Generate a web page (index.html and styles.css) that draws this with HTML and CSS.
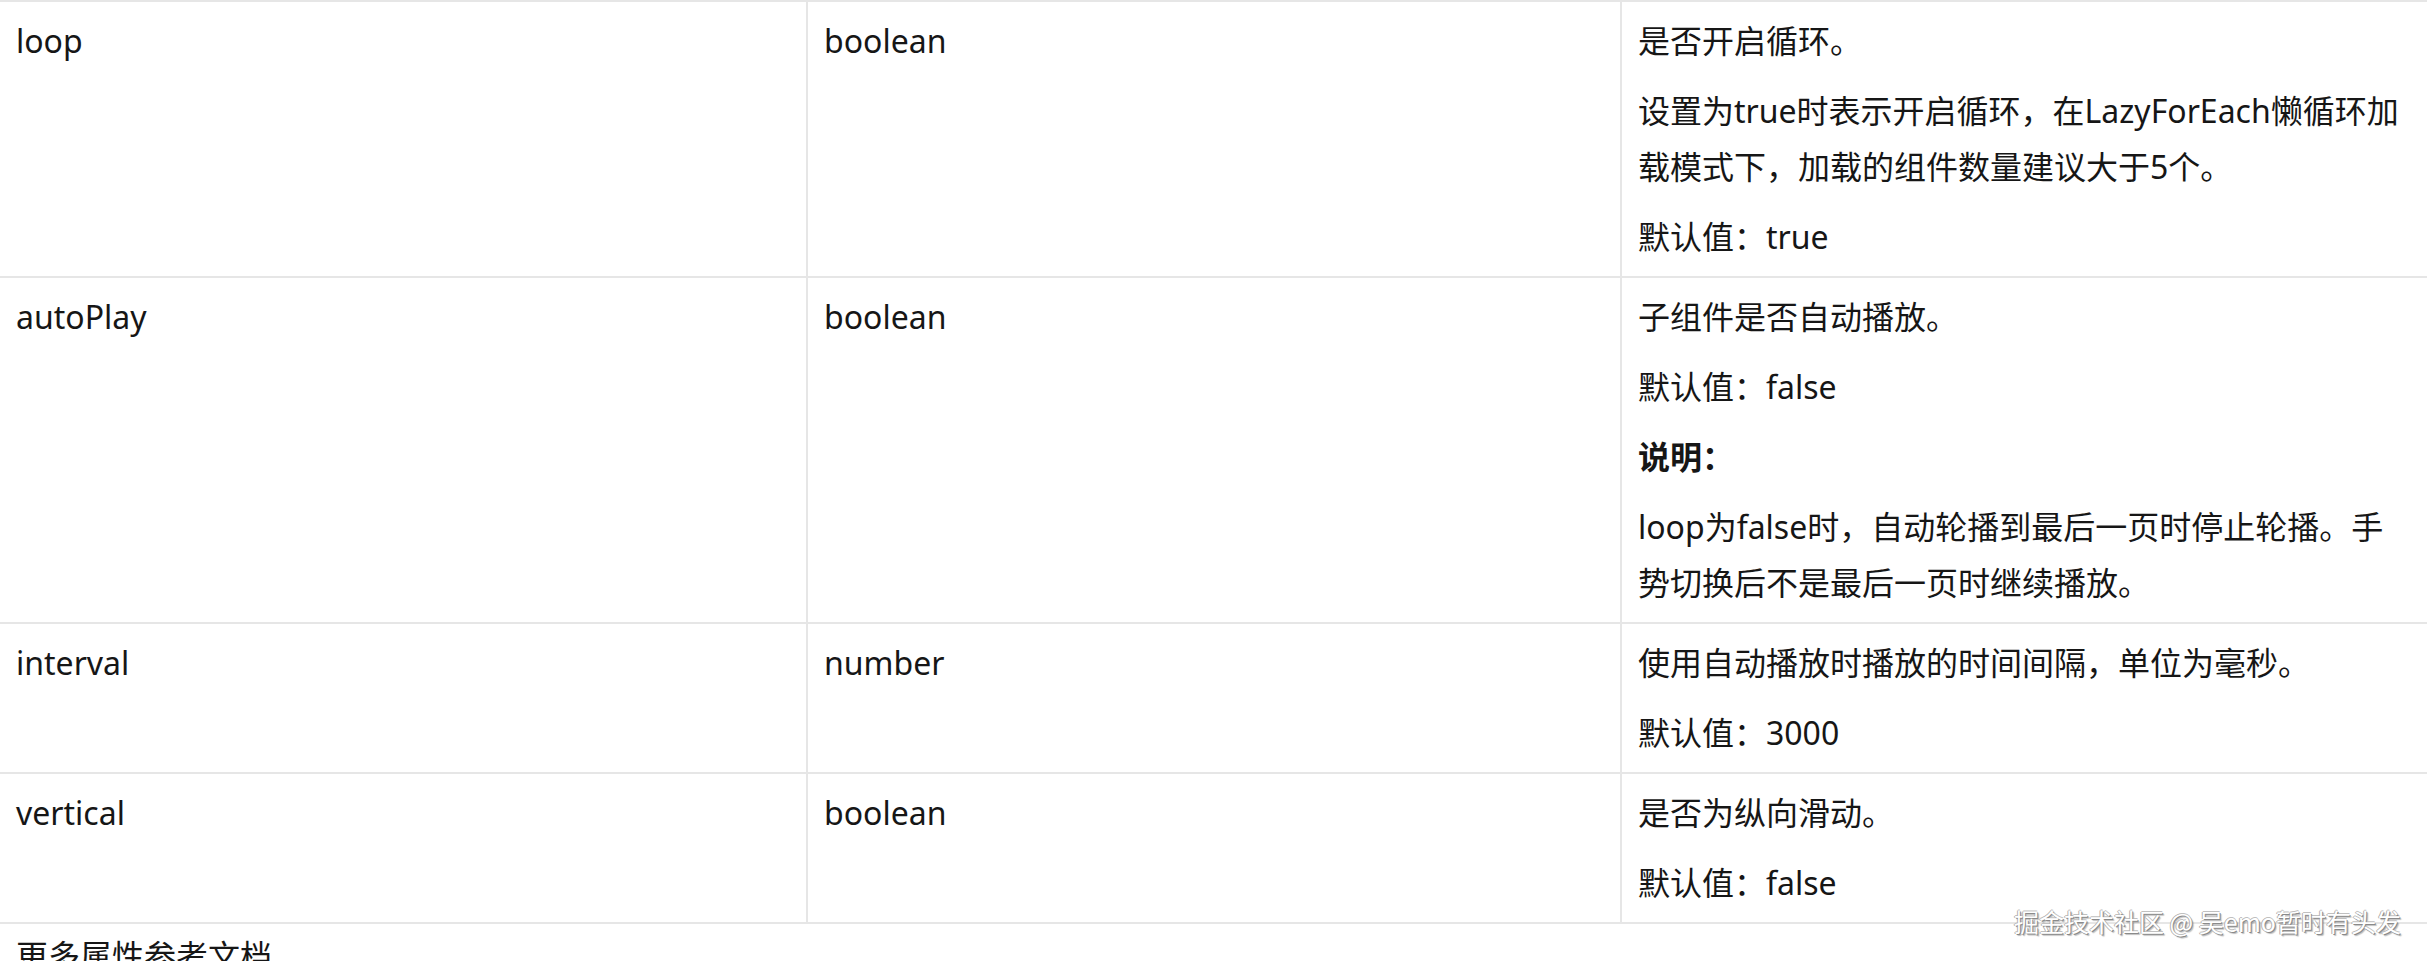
FILE: index.html
```html
<!DOCTYPE html>
<html lang="zh-CN">
<head>
<meta charset="utf-8">
<title>Swiper 属性</title>
<link rel="stylesheet" href="styles.css">
</head>
<body>
<div class="page">
  <div class="table">
    <div class="row">
      <div class="cell"><p>loop</p></div>
      <div class="cell"><p>boolean</p></div>
      <div class="cell">
        <p>是否开启循环。</p>
        <p>设置为true时表示开启循环，在LazyForEach懒循环加载模式下，加载的组件数量建议大于5个。</p>
        <p>默认值：true</p>
      </div>
    </div>
    <div class="row">
      <div class="cell"><p>autoPlay</p></div>
      <div class="cell"><p>boolean</p></div>
      <div class="cell">
        <p>子组件是否自动播放。</p>
        <p>默认值：false</p>
        <p class="strong">说明：</p>
        <p>loop为false时，自动轮播到最后一页时停止轮播。手势切换后不是最后一页时继续播放。</p>
      </div>
    </div>
    <div class="row">
      <div class="cell"><p>interval</p></div>
      <div class="cell"><p>number</p></div>
      <div class="cell">
        <p>使用自动播放时播放的时间间隔，单位为毫秒。</p>
        <p>默认值：3000</p>
      </div>
    </div>
    <div class="row">
      <div class="cell"><p>vertical</p></div>
      <div class="cell"><p>boolean</p></div>
      <div class="cell">
        <p>是否为纵向滑动。</p>
        <p>默认值：false</p>
      </div>
    </div>
  </div>
  <p class="after">更多属性参考文档</p>
  <div class="watermark">掘金技术社区 @ 吴emo暂时有头发</div>
</div>
</body>
</html>
```
FILE: styles.css
```css
html, body {
  margin: 0;
  padding: 0;
  background: #ffffff;
}
body {
  width: 2427px;
  height: 961px;
  overflow: hidden;
  font-family: "Noto Sans", "Noto Sans CJK SC", sans-serif;
  font-size: 32px;
  line-height: 56px;
  color: #161616;
}
.page {
  position: relative;
  height: 961px;
}
.table {
  display: flex;
  flex-direction: column;
}
.row {
  display: grid;
  grid-template-columns: 806px 814px 1fr;
  border-top: 2px solid #e6e6e6;
}
.row:last-child {
  border-bottom: 2px solid #e6e6e6;
}
.cell {
  padding: 11px 16px;
  display: flex;
  flex-direction: column;
  gap: 14px;
}
.cell + .cell {
  border-left: 2px solid #e6e6e6;
}
.cell p {
  margin: 0;
}
.strong {
  font-weight: 700;
}
.after {
  margin: 4px 0 0;
  padding: 0 16px;
}
.watermark {
  position: absolute;
  right: 26px;
  top: 903px;
  font-size: 25px;
  line-height: 36px;
  color: #ffffff;
  text-shadow: 1px 1px 0 #8a8a8a, -1px 0 0 #b0b0b0, 0 -1px 0 #c0c0c0, 2px 2px 1px rgba(0,0,0,0.25);
  font-family: "Noto Sans CJK SC", "Noto Sans", sans-serif;
}
```
